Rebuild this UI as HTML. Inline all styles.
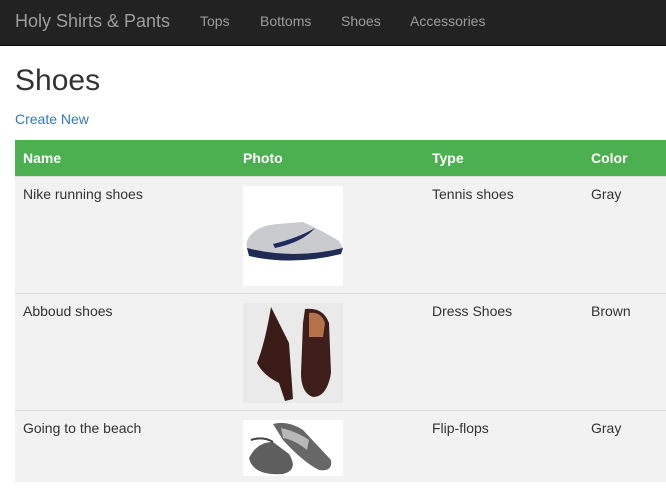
<!DOCTYPE html>
<html><head><style>
*{box-sizing:border-box;margin:0;padding:0}
body{width:666px;height:502px;overflow:hidden;background:#fff;font-family:"Liberation Sans",Arial,sans-serif;font-size:14px;color:#333}
.nav{height:46px;background:#222;position:relative;border-bottom:1px solid #080808}
.nav span{position:absolute;top:13px;color:#9d9d9d;font-size:14px}
.nav .brand{left:15px;top:11px;font-size:18px}
h1{position:absolute;left:15px;top:64px;font-size:30px;font-weight:normal;color:#333}
a{position:absolute;left:15px;top:111px;color:#337ab7;text-decoration:none}
table{position:absolute;left:15px;top:140px;width:660px;border-collapse:collapse}
th{background:#4caf50;color:#fff;text-align:left;height:36px;padding:0 8px;font-weight:bold}
td{background:#f2f2f2;vertical-align:top;padding:9px 8px 0;border-top:1px solid #ddd;height:117px}
.img{width:100px;height:100px;background:#fff}
</style></head><body>
<div class="nav"><span class="brand">Holy Shirts &amp; Pants</span><span style="left:200px">Tops</span><span style="left:260px">Bottoms</span><span style="left:341px">Shoes</span><span style="left:410px">Accessories</span></div>
<h1>Shoes</h1>
<a>Create New</a>
<table>
<tr><th style="width:220px">Name</th><th style="width:189px">Photo</th><th style="width:159px">Type</th><th>Color</th></tr>
<tr><td>Nike running shoes</td><td><div class="img"><svg width="100" height="100"><path d="M4 55 Q10 40 35 38 L60 36 Q80 45 96 55 L100 62 Q90 72 10 70 Q2 66 4 55Z" fill="#c9cbcf"/><path d="M4 62 Q50 74 100 62 L98 68 Q50 80 6 70Z" fill="#1f2a55"/><path d="M30 58 Q55 52 72 42 Q60 56 32 62Z" fill="#1f2a5e"/></svg></div></td><td>Tennis shoes</td><td>Gray</td></tr>
<tr><td>Abboud shoes</td><td><div class="img" style="background:#eaeaea"><svg width="100" height="100"><path d="M28 4 Q36 20 46 40 L50 96 L42 98 L36 80 Q20 72 14 60 Q22 40 28 4Z" fill="#3a1b17"/><path d="M62 6 Q80 4 86 20 L88 70 Q84 94 70 94 Q58 90 58 70 L60 20Z" fill="#3d1e1a"/><path d="M66 10 Q78 8 82 20 L80 34 L66 34Z" fill="#b5714a"/></svg></div></td><td>Dress Shoes</td><td>Brown</td></tr>
<tr><td style="height:72px">Going to the beach</td><td style="height:72px"><div class="img" style="height:56px"><svg width="100" height="56"><path d="M30 4 Q45 0 60 10 L88 40 Q90 52 76 50 Q60 42 40 20Z" fill="#676767"/><path d="M6 38 Q14 22 30 22 L46 34 Q56 50 40 54 Q10 56 6 38Z" fill="#5e5e5e"/><path d="M38 8 Q55 12 66 20 L64 30 Q52 20 40 18Z" fill="#b8b8b8"/><path d="M8 20 Q20 16 30 22" stroke="#444" stroke-width="2" fill="none"/></svg></div></td><td style="height:72px">Flip-flops</td><td style="height:72px">Gray</td></tr>
</table>
</body></html>
